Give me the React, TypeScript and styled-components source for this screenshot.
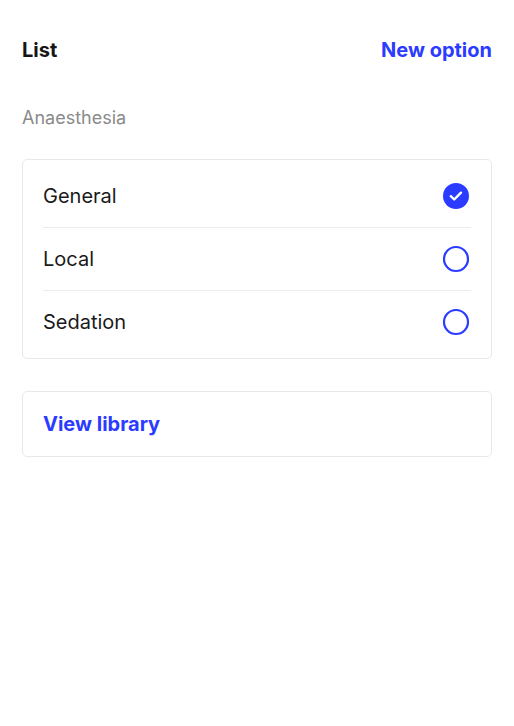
import React from "react";
import styled, { createGlobalStyle } from "styled-components";

const GlobalStyle = createGlobalStyle`
  body {
    margin: 0;
    background: #ffffff;
    font-family: Inter, "Noto Sans", sans-serif;
    color: #1a1a1a;
  }
`;

const Page = styled.div`
  padding: 36px 22px 0;
  display: flex;
  flex-direction: column;
`;

const Header = styled.div`
  display: flex;
  justify-content: space-between;
  align-items: center;
  height: 28px;
`;

const Title = styled.h1`
  margin: 0;
  font-size: 20px;
  font-weight: 700;
  color: #161616;
`;

const LinkButton = styled.button`
  border: none;
  background: none;
  padding: 0;
  font-family: inherit;
  font-size: 20px;
  font-weight: 700;
  color: #2b3bff;
  cursor: pointer;
`;

const SectionLabel = styled.div`
  margin-top: 42px;
  font-size: 18px;
  color: #8a8a8a;
  height: 24px;
  line-height: 24px;
`;

const Card = styled.div`
  border: 1px solid #e8e8e8;
  border-radius: 5px;
  background: #fff;
`;

const OptionList = styled(Card)`
  margin-top: 29px;
  padding: 5px 20px;
`;

const OptionRow = styled.label`
  display: flex;
  align-items: center;
  justify-content: space-between;
  height: 62px;
  font-size: 20px;
  color: #1a1a1a;
  & + & {
    border-top: 1px solid #ececec;
  }
`;

const LibraryCard = styled(Card)`
  margin-top: 32px;
  height: 64px;
  padding: 0 20px;
  display: flex;
  align-items: center;
`;

const Radio = ({ checked }: { checked: boolean }) => (
  <svg width="30" height="30" viewBox="0 0 30 30">
    {checked ? (
      <>
        <circle cx="15" cy="15" r="13" fill="#2b3bff" />
        <path d="M9.8 15.2l3.4 3.3 6.8-6.8" fill="none" stroke="#fff" strokeWidth="2.4" strokeLinecap="round" strokeLinejoin="round" />
      </>
    ) : (
      <circle cx="15" cy="15" r="12" fill="none" stroke="#2b3bff" strokeWidth="2.2" />
    )}
  </svg>
);

const options = [
  { name: "General", checked: true },
  { name: "Local", checked: false },
  { name: "Sedation", checked: false },
];

export default function App() {
  return (
    <>
      <GlobalStyle />
      <Page>
        <Header>
          <Title>List</Title>
          <LinkButton>New option</LinkButton>
        </Header>
        <SectionLabel>Anaesthesia</SectionLabel>
        <OptionList>
          {options.map((o) => (
            <OptionRow key={o.name}>
              <span>{o.name}</span>
              <Radio checked={o.checked} />
            </OptionRow>
          ))}
        </OptionList>
        <LibraryCard>
          <LinkButton>View library</LinkButton>
        </LibraryCard>
      </Page>
    </>
  );
}
